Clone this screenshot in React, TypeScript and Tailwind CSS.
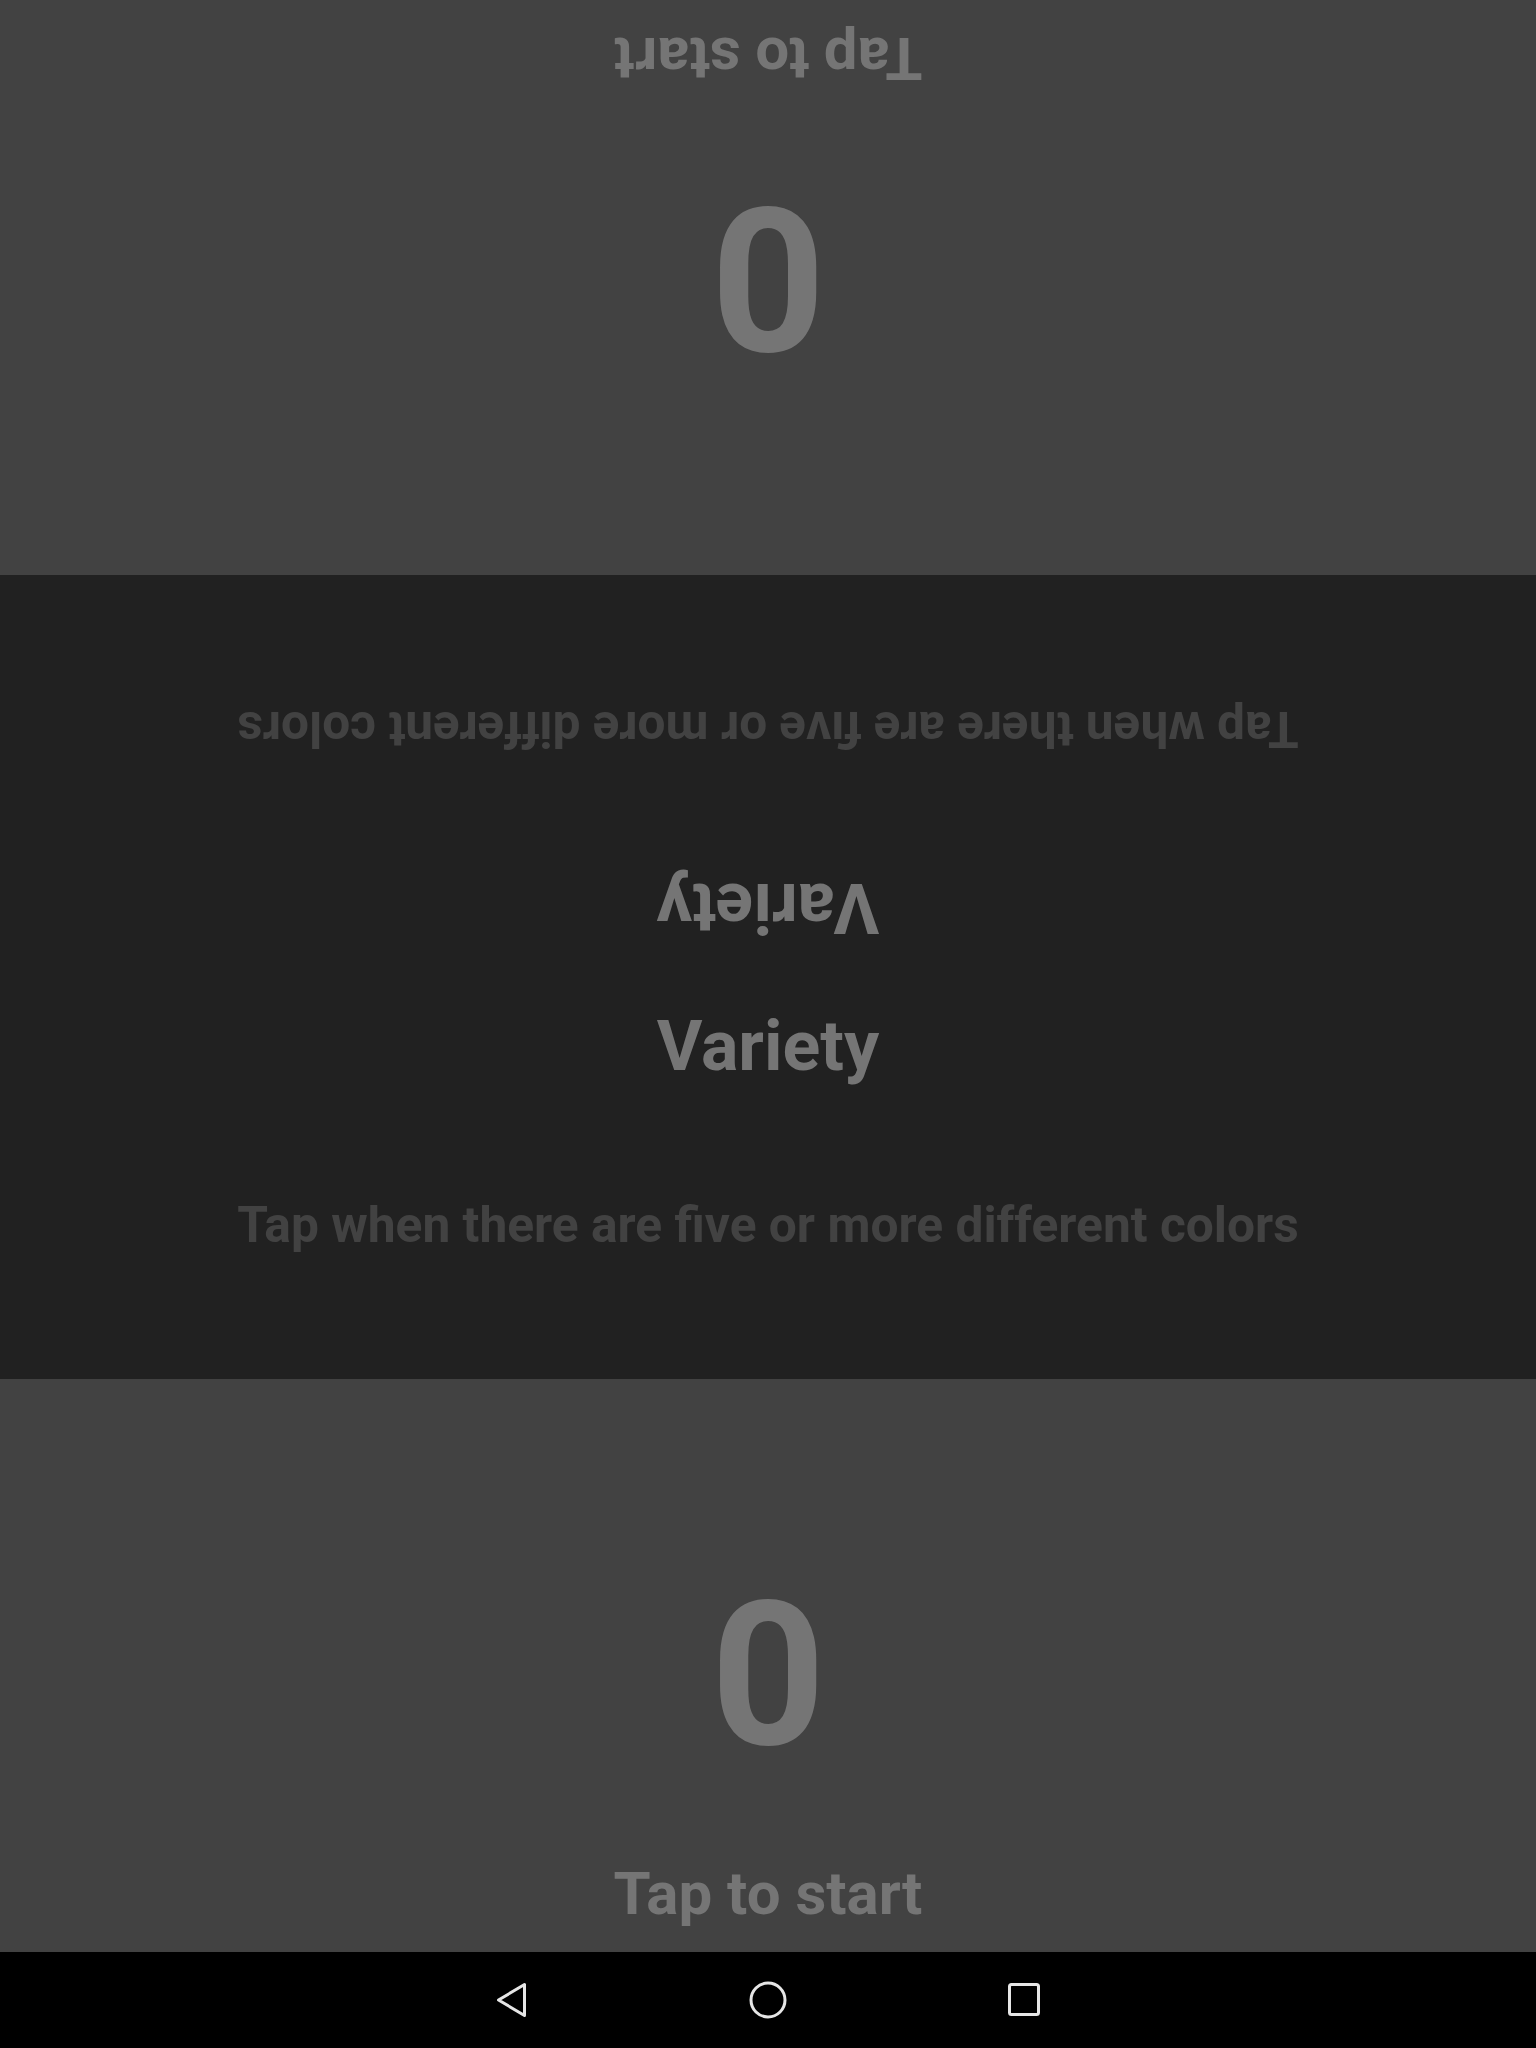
import React from "react";

function ScorePanel({ flipped }: { flipped?: boolean }) {
  return (
    <div
      className={
        "flex flex-1 flex-col items-center justify-end bg-[#424242] pb-[28px] " +
        (flipped ? "rotate-180" : "")
      }
    >
      <div className="text-[200px] font-bold leading-none text-[#757575]">0</div>
      <div className="mt-[88px] text-[60px] font-bold leading-none text-[#757575]">Tap to start</div>
    </div>
  );
}

function HalfMode({ flipped }: { flipped?: boolean }) {
  return (
    <div
      className={
        "flex h-[402px] flex-col items-center justify-start pt-[34px] " + (flipped ? "rotate-180" : "")
      }
    >
      <div className="text-[70px] font-bold leading-none text-[#757575]">Variety</div>
      <div className="mt-[120px] text-[49.7px] font-bold leading-none text-[#424242]">
        Tap when there are five or more different colors
      </div>
    </div>
  );
}

export default function App() {
  return (
    <div
      className="flex h-[2048px] w-[1536px] flex-col overflow-hidden bg-black"
      style={{ fontFamily: "Roboto, 'Noto Sans', sans-serif" }}
    >
      <div className="flex h-[575px] flex-col">
        <ScorePanel flipped />
      </div>
      <div className="flex h-[804px] flex-col bg-[#212121]">
        <HalfMode flipped />
        <HalfMode />
      </div>
      <div className="flex h-[573px] flex-col">
        <ScorePanel />
      </div>
      <div className="flex h-[96px] items-center justify-center bg-black">
        <div className="flex w-[256px] items-center justify-center">
          <svg width="40" height="40" viewBox="0 0 40 40" fill="none">
            <path
              d="M6.5 20 L32.5 4.5 L32.5 35.5 Z"
              stroke="#e6e6e6"
              strokeWidth="3"
              strokeLinejoin="round"
            />
          </svg>
        </div>
        <div className="flex w-[256px] items-center justify-center">
          <svg width="40" height="40" viewBox="0 0 40 40" fill="none">
            <circle cx="20" cy="20" r="17" stroke="#e6e6e6" strokeWidth="3" />
          </svg>
        </div>
        <div className="flex w-[256px] items-center justify-center">
          <svg width="40" height="40" viewBox="0 0 40 40" fill="none">
            <rect x="5.5" y="4.5" width="29" height="30" rx="2" stroke="#e6e6e6" strokeWidth="3" />
          </svg>
        </div>
      </div>
    </div>
  );
}
